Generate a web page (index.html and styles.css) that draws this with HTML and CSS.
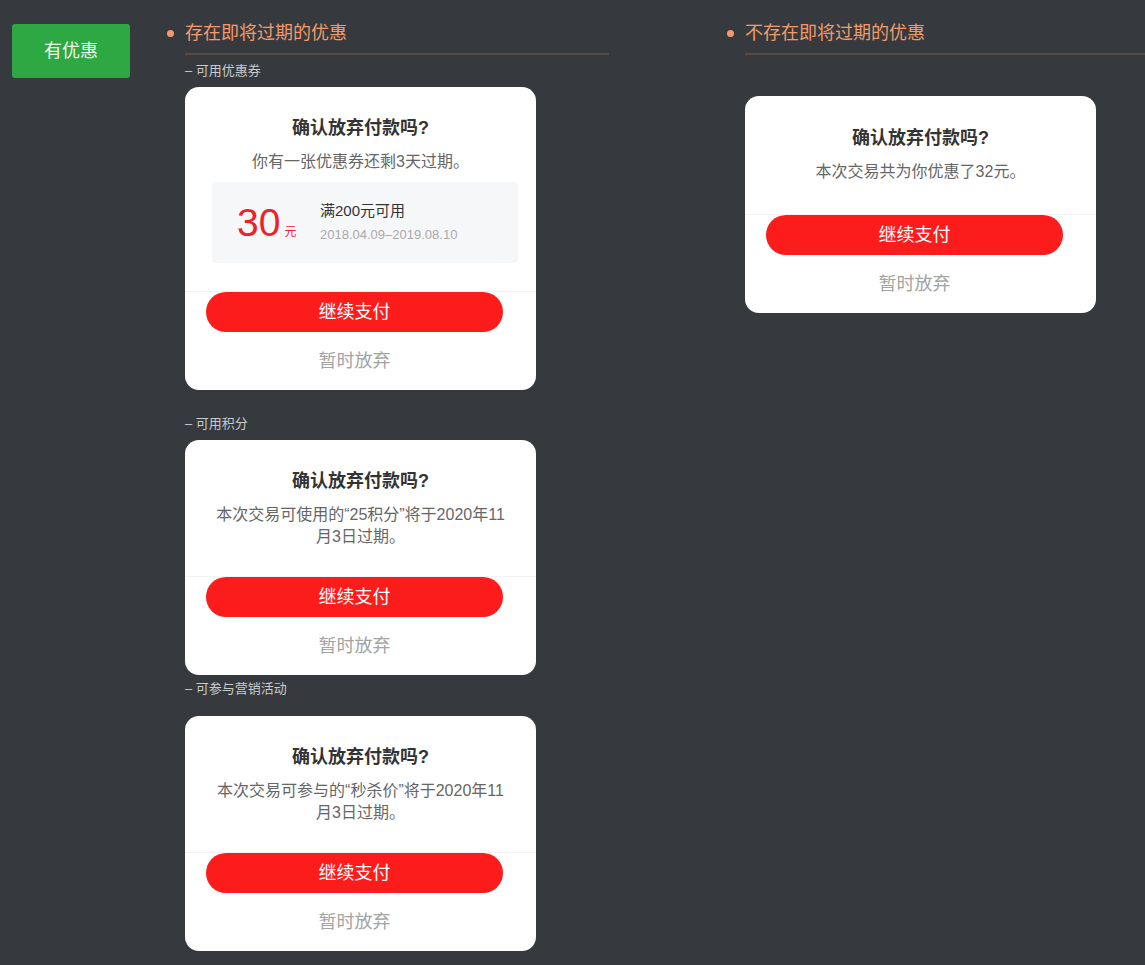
FILE: index.html
```html
<!DOCTYPE html>
<html lang="zh-CN">
<head>
<meta charset="utf-8">
<title>确认放弃付款</title>
<link rel="stylesheet" href="styles.css">
</head>
<body>
<div class="page">
  <aside class="side">
    <div class="tag">有优惠</div>
  </aside>

  <section class="col col-left">
    <div class="col-head">
      <span class="dot"></span>
      <h2 class="col-title">存在即将过期的优惠</h2>
    </div>
    <div class="col-body">
      <div class="group group-coupon">
        <div class="label">– 可用优惠券</div>
        <div class="card">
          <div class="card-body">
            <div class="card-title">确认放弃付款吗?</div>
            <div class="card-desc">你有一张优惠券还剩3天过期。</div>
            <div class="coupon">
              <div class="coupon-amount"><span class="coupon-num">30</span><span class="coupon-unit">元</span></div>
              <div class="coupon-info">
                <div class="coupon-cond">满200元可用</div>
                <div class="coupon-date">2018.04.09–2019.08.10</div>
              </div>
            </div>
          </div>
          <div class="card-foot">
            <div class="btn-primary">继续支付</div>
            <div class="btn-text">暂时放弃</div>
          </div>
        </div>
      </div>

      <div class="group group-points">
        <div class="label">– 可用积分</div>
        <div class="card">
          <div class="card-body">
            <div class="card-title">确认放弃付款吗?</div>
            <div class="card-desc">本次交易可使用的“25积分”将于2020年11月3日过期。</div>
          </div>
          <div class="card-foot">
            <div class="btn-primary">继续支付</div>
            <div class="btn-text">暂时放弃</div>
          </div>
        </div>
      </div>

      <div class="group group-promo">
        <div class="label">– 可参与营销活动</div>
        <div class="card">
          <div class="card-body">
            <div class="card-title">确认放弃付款吗?</div>
            <div class="card-desc">本次交易可参与的“秒杀价”将于2020年11月3日过期。</div>
          </div>
          <div class="card-foot">
            <div class="btn-primary">继续支付</div>
            <div class="btn-text">暂时放弃</div>
          </div>
        </div>
      </div>
    </div>
  </section>

  <section class="col col-right">
    <div class="col-head">
      <span class="dot"></span>
      <h2 class="col-title">不存在即将过期的优惠</h2>
    </div>
    <div class="col-body">
      <div class="card card-solo">
        <div class="card-body body-solo">
          <div class="card-title">确认放弃付款吗?</div>
          <div class="card-desc">本次交易共为你优惠了32元。</div>
        </div>
        <div class="card-foot">
          <div class="btn-primary">继续支付</div>
          <div class="btn-text">暂时放弃</div>
        </div>
      </div>
    </div>
  </section>
</div>
</body>
</html>
```

FILE: styles.css
```css
html, body {
  margin: 0;
  padding: 0;
  background: #363a3f;
}

body {
  font-family: "Liberation Sans", "Noto Sans CJK SC", sans-serif;
  color: #333;
}

.page {
  display: flex;
  align-items: flex-start;
  padding: 20px 0 0 12px;
  min-height: 945px;
}

.side {
  flex: none;
  padding-top: 4px;
}

.tag {
  width: 118px;
  height: 54px;
  line-height: 54px;
  text-align: center;
  background: #2ea843;
  color: #eef8ee;
  font-size: 18px;
  border-radius: 3px;
}

.col {
  flex: none;
}

.col-left {
  width: 444px;
  margin-left: 35px;
}

.col-right {
  flex: 1;
  margin-left: 116px;
}

.col-head {
  display: flex;
  align-items: flex-start;
}

.dot {
  flex: none;
  width: 7px;
  height: 7px;
  border-radius: 50%;
  background: #f29a6c;
  margin: 10px 11px 0 2px;
}

.col-title {
  flex: 1;
  margin: 0;
  font-size: 18px;
  line-height: 26px;
  font-weight: normal;
  color: #f29a6c;
  padding-bottom: 7px;
  border-bottom: 2px solid #5b4a44;
}

.col-body {
  padding-left: 20px;
}

.label {
  margin: 7px 0 7px;
  font-size: 13px;
  line-height: 18px;
  color: #c9cacc;
}

.group-points .label {
  margin-top: 25px;
}

.group-promo .label {
  margin-top: 5px;
  margin-bottom: 18px;
}

.card {
  width: 351px;
  background: #fff;
  border-radius: 14px;
  overflow: hidden;
}

.card-solo {
  margin-top: 41px;
}

.card-body {
  padding: 28px 25px 28px;
  text-align: center;
}

.body-solo {
  padding-top: 29px;
  padding-bottom: 31px;
}

.card-title {
  font-size: 18px;
  line-height: 26px;
  font-weight: 600;
  color: #333;
  margin-bottom: 10px;
}

.card-desc {
  font-size: 16px;
  line-height: 22px;
  color: #666;
}

.coupon {
  display: flex;
  align-items: center;
  width: 306px;
  height: 81px;
  margin: 9px 0 0 2px;
  padding-left: 25px;
  box-sizing: border-box;
  background: #f6f7f9;
  border-radius: 4px;
  text-align: left;
}

.coupon-amount {
  width: 83px;
  flex: none;
  display: flex;
  align-items: baseline;
  color: #f01f28;
}

.coupon-num {
  font-size: 39px;
  line-height: 40px;
}

.coupon-unit {
  font-size: 12px;
  margin-left: 4px;
}

.coupon-info {
  display: flex;
  flex-direction: column;
  gap: 3px;
}

.coupon-cond {
  font-size: 15px;
  line-height: 22px;
  color: #333;
}

.coupon-date {
  font-size: 13px;
  line-height: 20px;
  color: #aaa;
}

.card-foot {
  border-top: 1px solid #f3f3f3;
}

.btn-primary {
  width: 297px;
  height: 40px;
  margin-left: 21px;
  border-radius: 20px;
  background: #fc1c1c;
  color: #fff;
  font-size: 18px;
  line-height: 40px;
  text-align: center;
}

.btn-text {
  height: 58px;
  line-height: 58px;
  text-align: center;
  font-size: 18px;
  color: #a3a3a3;
  padding-right: 12px;
}
```
